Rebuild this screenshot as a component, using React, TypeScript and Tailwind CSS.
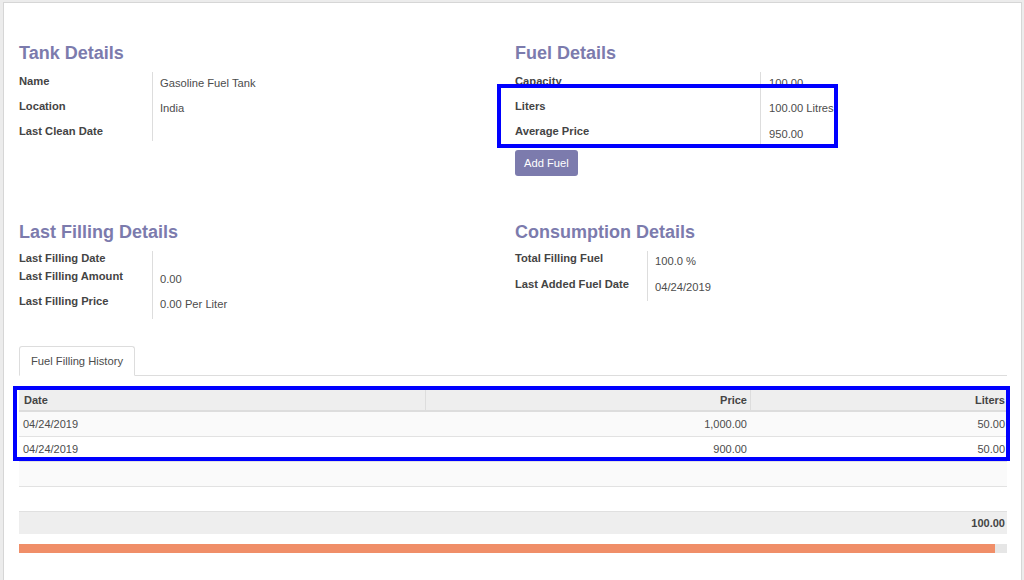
import React from "react";

type Row = { label: string; value?: string; h: string; pt: string; vpt: string };

const font = { fontFamily: '"Liberation Sans", Arial, sans-serif' };

function Group({ title, labelW, valuePl, rows }: { title: string; labelW: string; valuePl: string; rows: Row[] }) {
  return (
    <div>
      <h2 className="text-[18px] leading-[22px] font-bold text-[#7c7bad] mb-[8px]">{title}</h2>
      <div>
        {rows.map((r) => (
          <div key={r.label} className={`flex ${r.h}`}>
            <div className={`shrink-0 border-r border-[#dddddd] font-bold text-[#444444] leading-[14px] ${labelW} ${r.pt}`}>
              {r.label}
            </div>
            <div className={`text-[#4c4c4c] leading-[14px] ${valuePl} ${r.vpt}`}>{r.value}</div>
          </div>
        ))}
      </div>
    </div>
  );
}

const history = [
  { date: "04/24/2019", price: "1,000.00", liters: "50.00" },
  { date: "04/24/2019", price: "900.00", liters: "50.00" },
];

export default function App() {
  return (
    <div className="relative w-[1024px] h-[580px] overflow-hidden bg-[#ececec]" style={font}>
      <div className="ml-[3px] mt-[2px] w-[1019px] h-[600px] bg-white border border-[#d6d6d6] pl-[15px] pr-[14px] pt-[39px] text-[11.2px]">
        {/* top groups */}
        <div className="grid grid-cols-[496px_1fr]">
          <Group
            title="Tank Details"
            labelW="w-[134px]"
            valuePl="pl-[7px]"
            rows={[
              { label: "Name", value: "Gasoline Fuel Tank", h: "h-[27px]", pt: "pt-[2px]", vpt: "pt-[4px]" },
              { label: "Location", value: "India", h: "h-[25px]", pt: "pt-0", vpt: "pt-[2px]" },
              { label: "Last Clean Date", h: "h-[17px]", pt: "pt-0", vpt: "pt-[2px]" },
            ]}
          />
          <div>
            <Group
              title="Fuel Details"
              labelW="w-[246px]"
              valuePl="pl-[8px]"
              rows={[
                { label: "Capacity", value: "100.00", h: "h-[27px]", pt: "pt-[2px]", vpt: "pt-[4px]" },
                { label: "Liters", value: "100.00 Litres", h: "h-[25px]", pt: "pt-0", vpt: "pt-[2px]" },
                { label: "Average Price", value: "950.00", h: "h-[24px]", pt: "pt-0", vpt: "pt-[3px]" },
              ]}
            />
            <button className="mt-[2px] h-[26px] px-[9px] rounded-[3px] bg-[#7c7bad] text-white">Add Fuel</button>
          </div>
        </div>

        <div className="grid grid-cols-[496px_1fr] mt-[45px]">
          <Group
            title="Last Filling Details"
            labelW="w-[134px]"
            valuePl="pl-[7px]"
            rows={[
              { label: "Last Filling Date", h: "h-[18px]", pt: "pt-0", vpt: "pt-[2px]" },
              { label: "Last Filling Amount", value: "0.00", h: "h-[25px]", pt: "pt-0", vpt: "pt-[3px]" },
              { label: "Last Filling Price", value: "0.00 Per Liter", h: "h-[25px]", pt: "pt-0", vpt: "pt-[3px]" },
            ]}
          />
          <Group
            title="Consumption Details"
            labelW="w-[133px]"
            valuePl="pl-[7px]"
            rows={[
              { label: "Total Filling Fuel", value: "100.0 %", h: "h-[26px]", pt: "pt-0", vpt: "pt-[3px]" },
              { label: "Last Added Fuel Date", value: "04/24/2019", h: "h-[24px]", pt: "pt-0", vpt: "pt-[3px]" },
            ]}
          />
        </div>

        {/* tabs */}
        <div className="mt-[27px] flex border-b border-[#dddddd]">
          <div className="-mb-px h-[30px] px-[11px] flex items-center border border-[#dddddd] border-b-white rounded-t-[3px] bg-white text-[#4c4c4c]">
            Fuel Filling History
          </div>
        </div>

        {/* table */}
        <div className="mt-[14px] text-[11px] text-[#4c4c4c]">
          <div className="grid grid-cols-[406px_325px_257px] h-[22px] bg-[#eeeeee] border-b-2 border-[#dddddd] font-bold text-[#444444]">
            <div className="pl-[5px] flex items-center">Date</div>
            <div className="pr-[3px] flex items-center justify-end border-l border-[#dddddd]">Price</div>
            <div className="pr-[2px] flex items-center justify-end border-l border-[#dddddd]">Liters</div>
          </div>
          {history.map((h, i) => (
            <div
              key={i}
              className={`grid grid-cols-[406px_325px_257px] h-[25px] border-b border-[#e2e2e2] items-center ${i === 0 ? "bg-[#fafafa]" : "bg-white"}`}
            >
              <div className="pl-[4px]">{h.date}</div>
              <div className="pr-[3px] text-right">{h.price}</div>
              <div className="pr-[2px] text-right">{h.liters}</div>
            </div>
          ))}
          <div className="h-[25px] bg-[#fafafa] border-b border-[#e2e2e2]" />
          <div className="h-[24px] bg-white" />
          <div className="h-[23px] bg-[#eeeeee] border-t border-[#e0e0e0] flex items-center justify-end pr-[2px] font-bold text-[#444444]">
            100.00
          </div>
          <div className="mt-[10px] h-[9px] bg-[#e6e6e6]">
            <div className="h-full w-[976px] bg-[#f08e68]" />
          </div>
        </div>
      </div>

      {/* annotation boxes */}
      <div className="absolute left-[497px] top-[84px] w-[341px] h-[64px] border-4 border-[#0000ff]" />
      <div className="absolute left-[13px] top-[386px] w-[997px] h-[75px] border-4 border-[#0000ff]" />
    </div>
  );
}
